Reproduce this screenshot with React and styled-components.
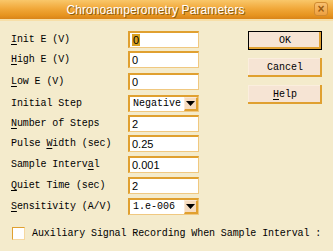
import styled, { createGlobalStyle } from 'styled-components'

const GlobalStyle = createGlobalStyle`
	html, body {
		margin: 0;
		padding: 0;
		background: #f4ebcc;
	}
`

const rows = [
	{ label: 'Init E (V)', key: 0, value: '0', gap: 0, selected: true },
	{ label: 'High E (V)', key: 0, value: '0', gap: 3 },
	{ label: 'Low E (V)', key: 0, value: '0', gap: 5 },
	{ label: 'Initial Step', key: -1, value: 'Negative', gap: 5, select: true },
	{ label: 'Number of Steps', key: 0, value: '2', gap: 3 },
	{ label: 'Pulse Width (sec)', key: 6, value: '0.25', gap: 3 },
	{ label: 'Sample Interval', key: 13, value: '0.001', gap: 4 },
	{ label: 'Quiet Time (sec)', key: 0, value: '2', gap: 4 },
	{ label: 'Sensitivity (A/V)', key: 0, value: '1.e-006', gap: 4, select: true },
]

const Label = ({ text, index }) => {
	if (index < 0) return <LabelText>{text}</LabelText>
	return (
		<LabelText>
			{text.slice(0, index)}
			<u>{text[index]}</u>
			{text.slice(index + 1)}
		</LabelText>
	)
}

const App = () => {
	return (
		<Window>
			<GlobalStyle />
			<TitleBar>
				<Title>Chronoamperometry Parameters</Title>
				<CloseButton>×</CloseButton>
			</TitleBar>

			<Body>
				<Form>
					{rows.map((row) => (
						<Row key={row.label} $gap={row.gap}>
							<Label text={row.label} index={row.key} />
							{row.select ? (
								<Select>
									<SelectText>{row.value}</SelectText>
									<DropButton>
										<svg width="9" height="5" viewBox="0 0 9 5">
											<path d="M0 0 H9 L4.5 5 Z" fill="#000" />
										</svg>
									</DropButton>
								</Select>
							) : (
								<Field>
									{row.selected ? <Highlight>{row.value}</Highlight> : row.value}
								</Field>
							)}
						</Row>
					))}
				</Form>

				<Buttons>
					<Button $default>OK</Button>
					<Button>Cancel</Button>
					<Button><u>H</u>elp</Button>
				</Buttons>
			</Body>

			<CheckRow>
				<CheckBox />
				<LabelText>Auxiliary Signal Recording When Sample Interval :</LabelText>
			</CheckRow>
		</Window>
	)
}

export default App

const Window = styled.div`
	width: 333px;
	height: 251px;
	overflow: hidden;
	background: #f4ebcc;
	font-family: "Liberation Mono", "DejaVu Sans Mono", monospace;
`

const TitleBar = styled.div`
	height: 19px;
	position: relative;
	display: flex;
	align-items: center;
	justify-content: center;
	padding-right: 22px;
	background: linear-gradient(#f9c76a 0%, #f1a83a 45%, #e69420 80%, #d9841a 100%);
	border-bottom: 2px solid #f7dfa8;
`

const Title = styled.span`
	font-family: "Liberation Sans", Arial, sans-serif;
	font-size: 12px;
	color: #fff;
	text-shadow: 1px 1px 0 #8a5a10;
	letter-spacing: 0.1px;
`

const CloseButton = styled.div`
	position: absolute;
	right: 5px;
	top: 2px;
	width: 14px;
	height: 14px;
	box-sizing: border-box;
	border: 1px solid #d08a30;
	border-radius: 3px;
	background: linear-gradient(#f8c070, #eea040);
	color: #9a5a10;
	font-family: "Liberation Sans", Arial, sans-serif;
	font-size: 12px;
	font-weight: bold;
	line-height: 12px;
	text-align: center;
`

const Body = styled.div`
	display: flex;
	padding: 10px 0 0 11px;
`

const Form = styled.div`
	width: 188px;
	display: flex;
	flex-direction: column;
`

const Row = styled.div`
	display: grid;
	grid-template-columns: 117px 71px;
	align-items: center;
	height: 17px;
	margin-top: ${(p) => p.$gap}px;
`

const LabelText = styled.span`
	font-size: 10px;
	color: #000;
	white-space: nowrap;
	letter-spacing: -0.1px;

	u {
		text-decoration-thickness: 1px;
		text-underline-offset: 2px;
	}
`

const Field = styled.div`
	height: 17px;
	box-sizing: border-box;
	background: #fff;
	border-top: 2px solid #e0a030;
	border-left: 2px solid #e0a030;
	border-right: 1px solid #f0c880;
	border-bottom: 1px solid #f0c880;
	font-family: "Liberation Sans", Arial, sans-serif;
	font-size: 11px;
	line-height: 14px;
	padding-left: 2px;
	color: #000;
`

const Highlight = styled.span`
	background: #d8a020;
	color: #000;
	padding: 0 1px;
`

const Select = styled(Field)`
	display: flex;
	justify-content: space-between;
	padding-left: 3px;
	font-family: "Liberation Mono", monospace;
	font-size: 10px;
`

const SelectText = styled.span`
	line-height: 14px;
`

const DropButton = styled.div`
	width: 14px;
	height: 14px;
	box-sizing: border-box;
	display: flex;
	align-items: center;
	justify-content: center;
	background: #f6dcc0;
	border-top: 1px solid #fbe9d6;
	border-left: 1px solid #fbe9d6;
	border-right: 2px solid #e0a030;
	border-bottom: 2px solid #e0a030;
`

const Buttons = styled.div`
	margin-left: 49px;
	display: flex;
	flex-direction: column;
	gap: 8px;
`

const Button = styled.div`
	width: 74px;
	height: 19px;
	box-sizing: border-box;
	display: flex;
	align-items: center;
	justify-content: center;
	background: #f6e4d4;
	font-size: 10px;
	color: #000;
	border: ${(p) => (p.$default ? '1px solid #000' : 'none')};
	box-shadow: ${(p) =>
		p.$default
			? 'inset -2px -2px 0 #e0a030'
			: 'inset -2px -2px 0 #e0a030, inset 1px 1px 0 #fbeede'};

	u {
		text-underline-offset: 2px;
	}
`

const CheckRow = styled.div`
	display: flex;
	align-items: center;
	gap: 7px;
	padding: 12px 0 0 12px;
`

const CheckBox = styled.div`
	width: 11px;
	height: 11px;
	flex-shrink: 0;
	background: #fff;
	border-top: 1px solid #e0a030;
	border-left: 1px solid #e0a030;
	border-right: 1px solid #f6d8a0;
	border-bottom: 1px solid #f6d8a0;
`
